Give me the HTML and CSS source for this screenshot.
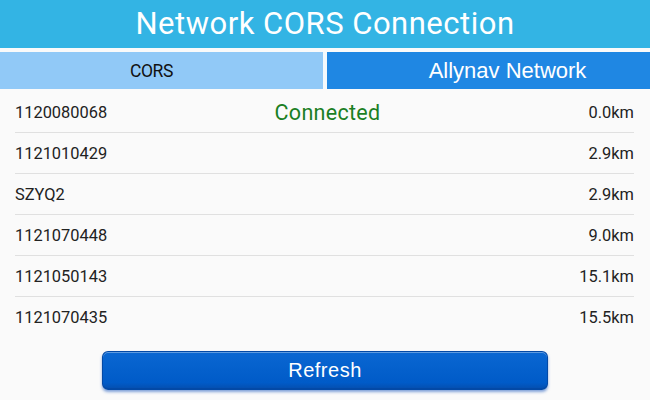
FILE: index.html
```html
<!DOCTYPE html>
<html>
<head>
  <title>Network CORS Connection</title>
  <link rel="stylesheet" href="styles.css">
</head>
<body>
  <div class="header">Network CORS Connection</div>

  <div class="tabs">
    <div class="tab tab-cors">CORS</div>
    <div class="tab tab-net">Allynav Network</div>
  </div>

  <div class="list">
    <div class="row">
      <span class="id">1120080068</span>
      <span class="status">Connected</span>
      <span class="dist">0.0km</span>
    </div>
    <div class="row">
      <span class="id">1121010429</span>
      <span class="status"></span>
      <span class="dist">2.9km</span>
    </div>
    <div class="row">
      <span class="id">SZYQ2</span>
      <span class="status"></span>
      <span class="dist">2.9km</span>
    </div>
    <div class="row">
      <span class="id">1121070448</span>
      <span class="status"></span>
      <span class="dist">9.0km</span>
    </div>
    <div class="row">
      <span class="id">1121050143</span>
      <span class="status"></span>
      <span class="dist">15.1km</span>
    </div>
    <div class="row last">
      <span class="id">1121070435</span>
      <span class="status"></span>
      <span class="dist">15.5km</span>
    </div>
  </div>

  <div class="actions">
    <button class="refresh">Refresh</button>
  </div>
</body>
</html>
```

FILE: styles.css
```css
body { margin: 0; background: #fafafa; font-family: Roboto, "Liberation Sans", sans-serif; width: 650px; height: 400px; overflow: hidden; }

.header { height: 48px; line-height: 48px; background: #33b4e4; color: #fff; text-align: center; font-size: 31px; letter-spacing: 0.5px; }

.tabs { display: grid; grid-template-columns: 1fr 1fr; gap: 4px; margin-top: 4px; height: 37px; background: #f4f9fc; }
.tab { display: flex; align-items: center; justify-content: center; }
.tab-cors { background: #91c9f7; color: #111; font-size: 17.5px; letter-spacing: -0.4px; padding-right: 20px; }
.tab-net { background: #1f87e3; color: #fff; font-family: "Liberation Sans", Arial, sans-serif; font-size: 22px; padding-left: 38px; }

.list { padding: 3px 16px 0 15px; }
.row { display: flex; align-items: center; height: 40px; border-bottom: 1px solid #e0e0e0; font-size: 16.4px; color: #222; }
.row.last { border-bottom: none; }
.id { flex: 1; }
.status { flex: 1; text-align: center; color: #1b7f24; font-size: 21.5px; letter-spacing: 0.3px; padding-left: 6px; }
.dist { flex: 1; text-align: right; }

.actions { display: flex; justify-content: center; padding-top: 14px; }
.refresh { width: 446px; height: 39px; border: 1px solid #0349a6; border-bottom-width: 2px; border-radius: 6px;
           background: linear-gradient(#0a67d2, #005bc8 85%, #0450b2); color: #fff; font-family: "Liberation Sans", Arial, sans-serif;
           font-size: 20px; letter-spacing: 0.5px; box-shadow: inset 0 1px 0 rgba(255,255,255,0.35), 0 2px 3px rgba(30,90,190,0.55); }
```
